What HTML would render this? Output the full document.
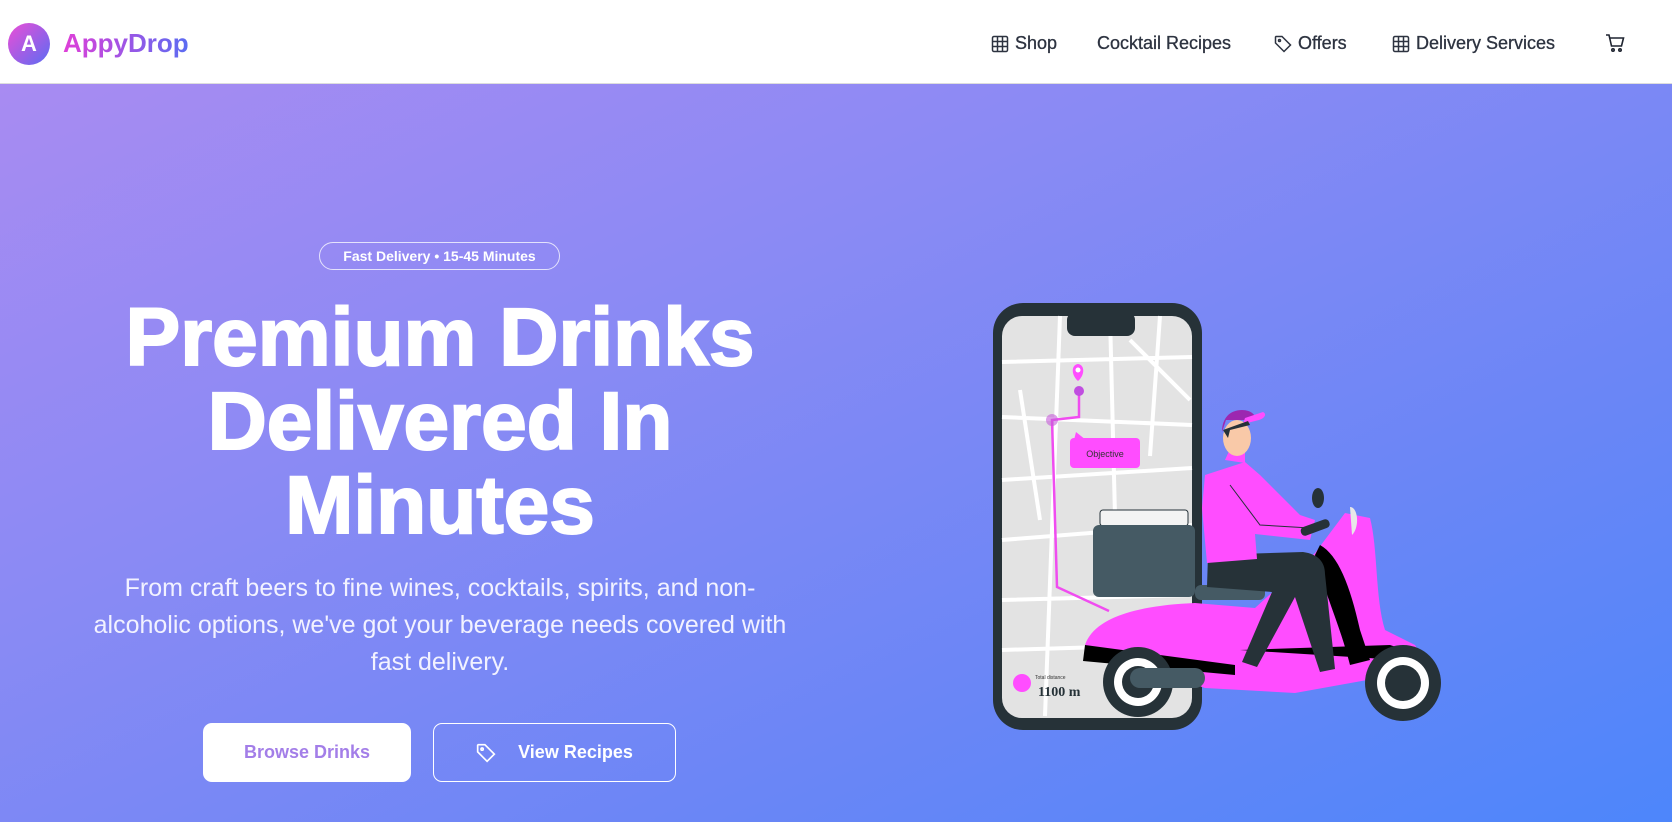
<!DOCTYPE html>
<html><head><meta charset="utf-8"><style>
*{margin:0;padding:0;box-sizing:border-box}
body{width:1672px;height:822px;overflow:hidden;font-family:"Liberation Sans",sans-serif;background:#fff}
.nav{position:absolute;left:0;top:0;width:1672px;height:84px;background:#fff;border-bottom:1px solid #ddd}
.logo{position:absolute;left:8px;top:23px;width:42px;height:42px;border-radius:50%;background:linear-gradient(135deg,#ec4ed6,#5b6cf3);color:#fff;font-weight:700;font-size:22px;text-align:center;line-height:42px}
.brand{position:absolute;left:63px;top:28px;font-size:26px;font-weight:700;background:linear-gradient(90deg,#e03fd8,#5a6cf2);-webkit-background-clip:text;color:transparent}
.ni{position:absolute;top:33px;font-size:18px;color:#2d3340;display:flex;align-items:center;gap:6px;-webkit-text-stroke:0.3px #2d3340}
.ni svg{width:18px;height:18px}
.hero{position:absolute;left:0;top:84px;width:1672px;height:738px;background:linear-gradient(155deg,#a88bf2 0%,#8a8af4 35%,#6a86f6 70%,#4d86fb 100%)}
.badge{position:absolute;left:319px;top:242px;width:241px;height:28px;border:1px solid rgba(255,255,255,.75);border-radius:14px;color:#fff;font-size:14px;font-weight:700;text-align:center;line-height:26px}
h1{position:absolute;left:40px;top:296px;width:800px;text-align:center;color:#fff;font-size:82px;font-weight:900;line-height:84px;-webkit-text-stroke:2px #fff}
p{position:absolute;left:40px;top:570px;width:800px;text-align:center;color:#f2f2ff;font-size:25px;line-height:37px}
.b1{position:absolute;left:203px;top:723px;width:208px;height:59px;background:#fff;border-radius:9px;color:#a37ee8;font-size:18px;font-weight:700;text-align:center;line-height:59px}
.b2{position:absolute;left:433px;top:723px;width:243px;height:59px;border:1px solid #fff;border-radius:9px;color:#fff;font-size:18px;font-weight:700;display:flex;align-items:center;justify-content:center;gap:22px}
</style></head><body>
<div class="nav">
<div class="logo">A</div><div class="brand">AppyDrop</div>
<div class="ni" style="left:991px"><svg viewBox="0 0 18 18" fill="none" stroke="#2d3340" stroke-width="1.5"><rect x="1.5" y="1.5" width="15" height="15" rx="1.5"/><path d="M1.5 6.5h15M1.5 11.5h15M6.5 1.5v15M11.5 1.5v15"/></svg>Shop</div>
<div class="ni" style="left:1097px">Cocktail Recipes</div>
<div class="ni" style="left:1274px"><svg viewBox="0 0 18 18" fill="none" stroke="#2d3340" stroke-width="1.5"><path d="M1.5 2v6l8.5 8.5 6.5-6.5L8 1.5H2z"/><circle cx="5.5" cy="5.5" r="1"/></svg>Offers</div>
<div class="ni" style="left:1392px"><svg viewBox="0 0 18 18" fill="none" stroke="#2d3340" stroke-width="1.5"><rect x="1.5" y="1.5" width="15" height="15" rx="1.5"/><path d="M1.5 6.5h15M1.5 11.5h15M6.5 1.5v15M11.5 1.5v15"/></svg>Delivery Services</div>
<div class="ni" style="left:1605px"><svg viewBox="0 0 20 20" fill="none" stroke="#1f2430" stroke-width="1.6" style="width:20px;height:20px"><path d="M1 2h3l2.5 11h10l2-8H5"/><circle cx="8" cy="17" r="1.2"/><circle cx="15" cy="17" r="1.2"/></svg></div>
</div>
<div class="hero"></div>
<div class="badge">Fast Delivery • 15-45 Minutes</div>
<h1>Premium Drinks<br>Delivered In<br>Minutes</h1>
<p>From craft beers to fine wines, cocktails, spirits, and non-<br>alcoholic options, we've got your beverage needs covered with<br>fast delivery.</p>
<div class="b1">Browse Drinks</div>
<div class="b2"><svg width="20" height="20" viewBox="0 0 18 18" fill="none" stroke="#fff" stroke-width="1.5"><path d="M1.5 2v6l8.5 8.5 6.5-6.5L8 1.5H2z"/><circle cx="5.5" cy="5.5" r="1"/></svg>View Recipes</div>

<svg style="position:absolute;left:960px;top:290px" width="500" height="450" viewBox="0 0 500 450">
<rect x="33" y="13" width="209" height="427" rx="30" fill="#263238"/>
<rect x="42" y="26" width="190" height="402" rx="20" fill="#e3e3e3"/>
<g stroke="#fff" stroke-width="4" fill="none">
<path d="M42 72l190-5M42 127l190 8M42 190l190-12M42 250l190-15M42 310l190-5M42 360l100-3M100 26l-15 400M150 26l5 200M200 26l-10 140M170 50l60 60M60 100l20 130"/>
</g>
<rect x="107" y="22" width="68" height="24" rx="8" fill="#263238"/>
<path d="M119 101v26l-27 3 5 167 52 24" stroke="#f04cf0" stroke-width="2.5" fill="none"/>
<circle cx="92" cy="130" r="6" fill="#c45bd8" opacity=".6"/>
<circle cx="119" cy="101" r="5" fill="#c04ee0"/>
<path d="M118 91c-7-6-7-16 0-17c7 1 7 11 0 17z" fill="#ff4dff"/><circle cx="118" cy="80" r="2.5" fill="#fff"/>
<rect x="110" y="148" width="70" height="30" rx="4" fill="#ff4dff"/><path d="M114 150l2-8 10 8z" fill="#ff4dff"/>
<text x="145" y="167" font-size="9" fill="#333" text-anchor="middle" font-family="Liberation Sans">Objective</text>
<circle cx="62" cy="393" r="9" fill="#ff4dff"/>
<text x="75" y="389" font-size="5" fill="#333" font-family="Liberation Sans">Total distance</text>
<text x="78" y="406" font-size="14" fill="#263238" font-weight="700" font-family="Liberation Serif">1100 m</text>
<rect x="140" y="220" width="88" height="16" rx="3" fill="#f3f3f3" stroke="#263238"/>
<rect x="133" y="235" width="102" height="72" rx="6" fill="#455a64"/>
<rect x="235" y="295" width="70" height="15" rx="6" fill="#455a64"/>
<path d="M125 355c10-30 60-40 110-42l60 5 60-55 30-40 25 5c8 30 5 80 15 112l30 15c10 15 5 25-20 30l-100 18-90-5z" fill="#ff4dff"/>
<path d="M125 355l150 20 0 10-152-14z" fill="#000"/>
<path d="M360 255c18 10 30 40 40 85l10 30-20 5c-10-40-25-70-35-110z" fill="#000"/>
<path d="M280 360l150-5 30 10-20 5z" fill="#000"/>
<circle cx="178" cy="392" r="35" fill="#263238"/><circle cx="178" cy="392" r="24" fill="#fff"/><circle cx="178" cy="392" r="16" fill="#263238"/>
<rect x="170" y="378" width="75" height="20" rx="10" fill="#455a64"/>
<circle cx="443" cy="393" r="38" fill="#263238"/><circle cx="443" cy="393" r="26" fill="#fff"/><circle cx="443" cy="393" r="18" fill="#263238"/>
<path d="M390 217c8 0 10 20 2 28z" fill="#e8e8e8"/>
<ellipse cx="358" cy="208" rx="6" ry="10" fill="#263238"/>
<path d="M248 265l95-3c15 2 22 10 22 22l10 95-15 3-25-75-38 70-15-5 30-70-65-5z" fill="#263238"/>
<path d="M245 185l40-13 15 13 40 40 15 5-5 20-55-6 2 25-50 4-5-55z" fill="#ff4dff"/>
<path d="M270 195l30 40 50 3" stroke="#263238" fill="none"/>
<rect x="340" y="233" width="30" height="9" rx="4" fill="#263238" transform="rotate(-20 355 237)"/>
<path d="M265 170l20 3 0-12-15-2z" fill="#ff4dff"/>
<ellipse cx="277" cy="148" rx="14" ry="18" fill="#f9c9a8"/>
<path d="M262 142c0-14 8-22 20-22c10 0 14 6 14 10h-30z" fill="#9c27b0"/>
<path d="M285 128l18-6c4 2 2 6-4 8l-16 4z" fill="#ff4dff"/>
<path d="M263 140l5 8 2-8 20-5-2-4z" fill="#263238"/>
</svg>
</body></html>
